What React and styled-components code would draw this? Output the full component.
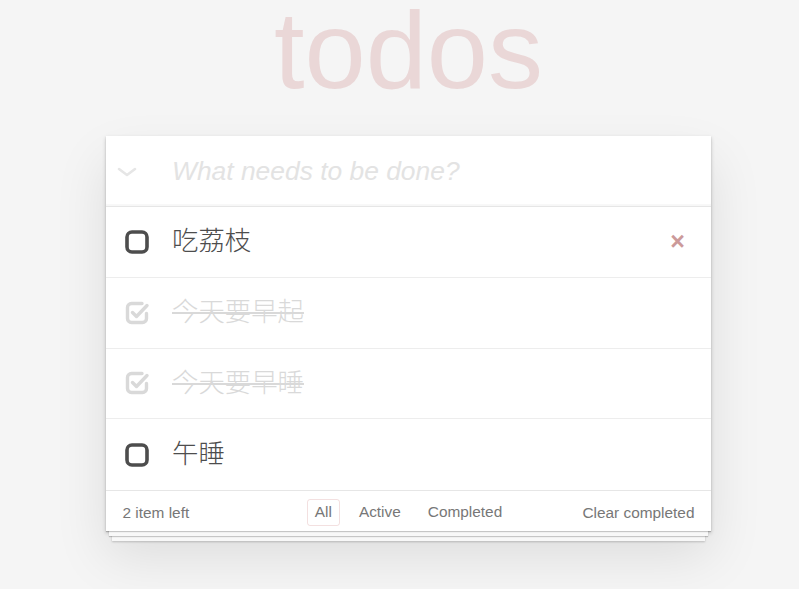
import React from 'react'
import styled, { createGlobalStyle } from 'styled-components'

const GlobalStyle = createGlobalStyle`
  html, body {
    margin: 0;
    padding: 0;
  }
  body {
    min-height: 100vh;
    background: #f5f5f5;
    color: #4d4d4d;
    font-family: "Liberation Sans", "Noto Sans CJK SC", Arial, sans-serif;
    font-weight: 300;
  }
`

const todos = [
  { id: 1, title: '吃荔枝', completed: false },
  { id: 2, title: '今天要早起', completed: true },
  { id: 3, title: '今天要早睡', completed: true },
  { id: 4, title: '午睡', completed: false },
]

const Page = styled.div`
  width: 605px;
  margin-left: 106px;
  padding-bottom: 44px;
`

const Title = styled.h1`
  margin: 0 0 36px;
  height: 100px;
  font-size: 110px;
  line-height: 100px;
  font-weight: 100;
  text-align: center;
  color: rgba(175, 47, 47, 0.15);
  font-family: "Liberation Sans", Arial, sans-serif;
`

// the stacked "sheets" under the card come from the extra shadow layers
const Card = styled.section`
  background: #fff;
  box-shadow: 0 1px 1px rgba(0, 0, 0, 0.2), 0 8px 0 -3px #f8f8f8,
    0 9px 1px -3px rgba(0, 0, 0, 0.2), 0 16px 0 -6px #f8f8f8,
    0 17px 2px -6px rgba(0, 0, 0, 0.2), 0 2px 4px 0 rgba(0, 0, 0, 0.2),
    0 25px 50px 0 rgba(0, 0, 0, 0.1);
`

const Header = styled.header`
  height: 71px;
  box-sizing: border-box;
  display: flex;
  align-items: center;
  border-bottom: 1px solid #e6e6e6;
  box-shadow: inset 0 -2px 1px rgba(0, 0, 0, 0.03);
`

const ToggleAll = styled.div`
  width: 66px;
  display: flex;
  align-items: center;
  padding: 2px 0 0 11px;
  box-sizing: border-box;
`

const NewTodo = styled.input`
  flex: 1;
  border: none;
  outline: none;
  background: transparent;
  padding: 0 16px 0 0;
  font-family: "Liberation Sans", Arial, sans-serif;
  font-size: 26.4px;
  font-style: italic;
  font-weight: 300;
  color: #4d4d4d;
  &::placeholder {
    color: #e3e3e3;
    font-style: italic;
  }
`

const List = styled.ul`
  list-style: none;
  margin: 0;
  padding: 0;
`

const Item = styled.li`
  height: 70.75px;
  box-sizing: border-box;
  display: flex;
  align-items: center;
  border-bottom: 1px solid #ededed;
  &:last-child {
    border-bottom: none;
  }
`

const Check = styled.div`
  width: 66px;
  display: flex;
  align-items: center;
  padding-left: 18px;
  box-sizing: border-box;
  color: ${({ $done }) => ($done ? '#d9d9d9' : '#4d4d4d')};
`

const Label = styled.label`
  flex: 1;
  font-family: "Liberation Sans", "Noto Sans CJK SC", sans-serif;
  font-size: 26.4px;
  font-weight: 300;
  line-height: 1.2;
  color: ${({ $done }) => ($done ? '#d9d9d9' : '#4d4d4d')};
  text-decoration: ${({ $done }) => ($done ? 'line-through' : 'none')};
`

const Destroy = styled.button`
  width: 44px;
  margin-right: 11.5px;
  border: none;
  background: none;
  padding: 0;
  font-family: "Liberation Sans", Arial, sans-serif;
  font-size: 25px;
  font-weight: 700;
  line-height: 1;
  color: #cc9a9a;
  text-align: center;
  visibility: ${({ $show }) => ($show ? 'visible' : 'hidden')};
`

const Footer = styled.footer`
  height: 41px;
  box-sizing: border-box;
  border-top: 1px solid #e6e6e6;
  padding: 3px 16.5px 0;
  display: grid;
  grid-template-columns: 1fr auto 1fr;
  align-items: center;
  font-family: "Liberation Sans", Arial, sans-serif;
  font-size: 15.4px;
  color: #777;
`

const Count = styled.span`
  justify-self: start;
`

const Filters = styled.ul`
  list-style: none;
  margin: 0;
  padding: 0;
  display: flex;
`

const Filter = styled.li`
  margin: 0 5.5px;
  padding: 3.3px 7px;
  border-radius: 3px;
  border: 1px solid ${({ $active }) => ($active ? 'rgba(175, 47, 47, 0.15)' : 'transparent')};
  line-height: 1.2;
`

const Clear = styled.button`
  justify-self: end;
  border: none;
  background: none;
  padding: 0;
  font: inherit;
  color: inherit;
`

const Chevron = () => (
  <svg width="20" height="10" viewBox="0 0 20 10">
    <polyline points="2,2 10,8 18,2" fill="none" stroke="#e6e6e6" strokeWidth="2.6" strokeLinecap="round" strokeLinejoin="round" />
  </svg>
)

const BoxIcon = ({ done }) => (
  <svg width="26" height="26" viewBox="0 0 26 26">
    {done ? (
      <>
        <path d="M18 3.5 H7.5 a4 4 0 0 0 -4 4 v11 a4 4 0 0 0 4 4 h11 a4 4 0 0 0 4 -4 v-5" fill="none" stroke="currentColor" strokeWidth="3.4" strokeLinecap="round" />
        <path d="M8.5 12.5 l4 4 L23 5.5" fill="none" stroke="currentColor" strokeWidth="3.4" strokeLinecap="round" strokeLinejoin="round" />
      </>
    ) : (
      <rect x="3" y="3" width="20" height="20" rx="5" fill="#fff" stroke="currentColor" strokeWidth="3.6" />
    )}
  </svg>
)

const App = () => {
  const left = todos.filter((t) => !t.completed).length
  return (
    <>
      <GlobalStyle />
      <Page>
        <Title>todos</Title>
        <Card>
          <Header>
            <ToggleAll>
              <Chevron />
            </ToggleAll>
            <NewTodo placeholder="What needs to be done?" />
          </Header>
          <List>
            {todos.map((t, i) => (
              <Item key={t.id}>
                <Check $done={t.completed}>
                  <BoxIcon done={t.completed} />
                </Check>
                <Label $done={t.completed}>{t.title}</Label>
                <Destroy $show={i === 0}>×</Destroy>
              </Item>
            ))}
          </List>
          <Footer>
            <Count>{left} item left</Count>
            <Filters>
              <Filter $active>All</Filter>
              <Filter>Active</Filter>
              <Filter>Completed</Filter>
            </Filters>
            <Clear>Clear completed</Clear>
          </Footer>
        </Card>
      </Page>
    </>
  )
}

export default App
